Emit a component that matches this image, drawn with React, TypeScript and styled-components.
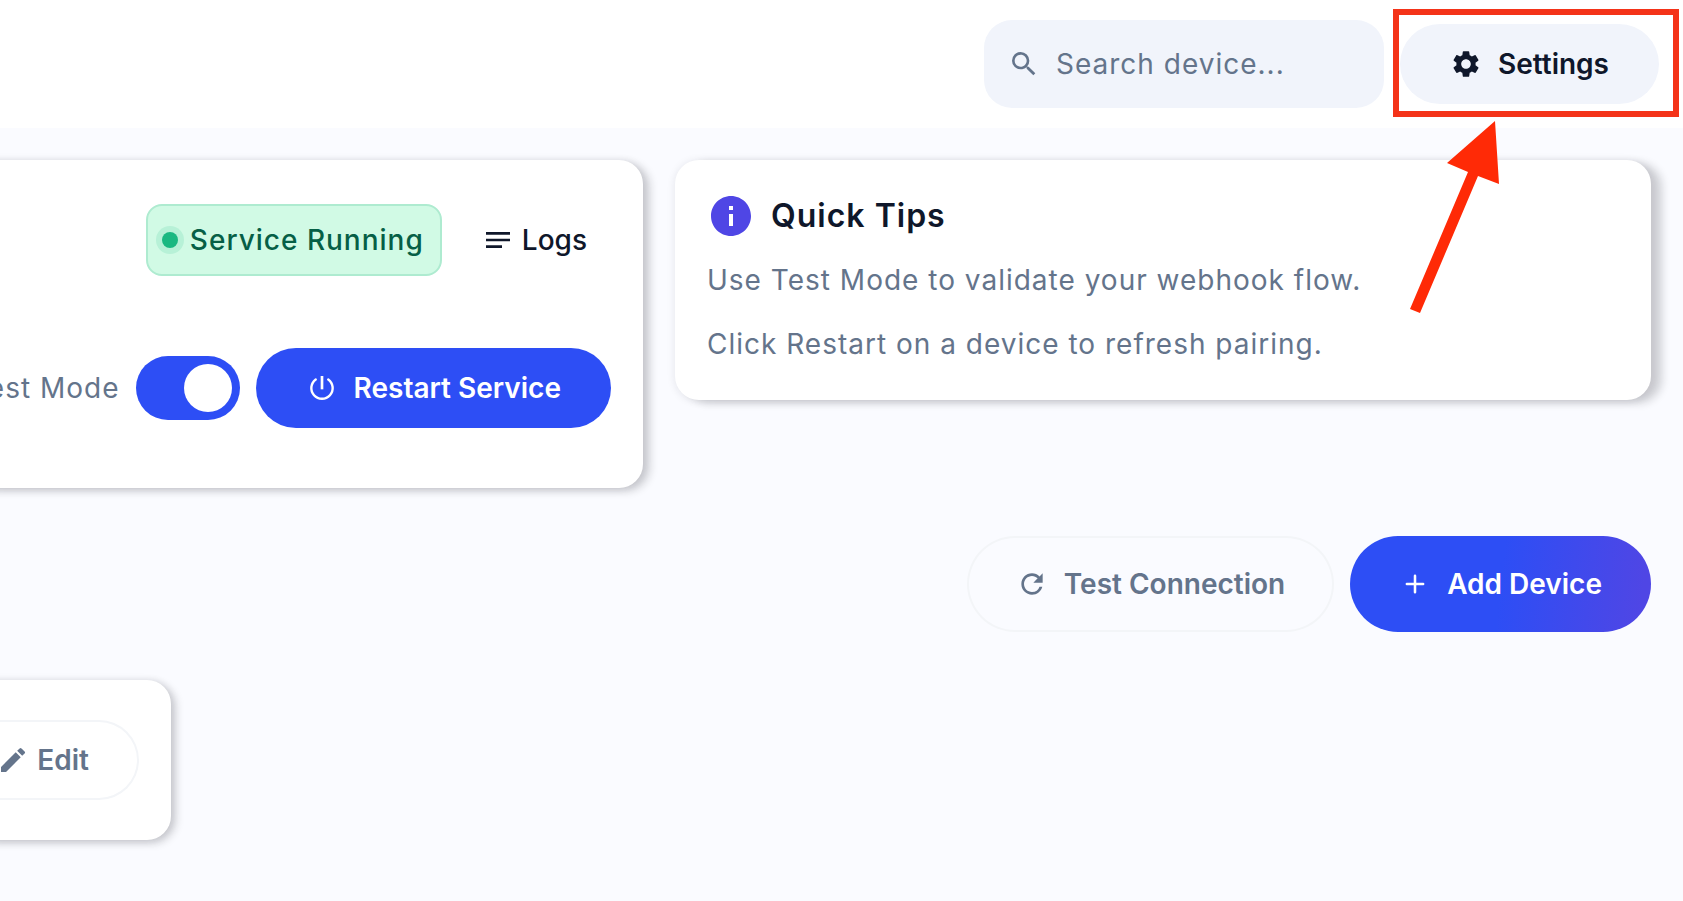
import React from "react";
import styled, { createGlobalStyle, css } from "styled-components";
import { MdSearch, MdSettings, MdNotes, MdInfo, MdEdit, MdRefresh } from "react-icons/md";

const color = {
  page: "#fafbff",
  surface: "#ffffff",
  field: "#f1f4fb",
  ink: "#0f172a",
  muted: "#64748b",
  primary: "#2d4ef5",
  accent: "#4f46e5",
  outline: "#f3f5f8",
  marker: "#f43319",
  arrow: "#ff2a06",
};

const GlobalStyle = createGlobalStyle`
  *, *::before, *::after { box-sizing: border-box; }
  body {
    margin: 0;
    background: ${color.page};
    color: ${color.ink};
    font-family: Inter, "Liberation Sans", sans-serif;
    font-size: 28px;
    line-height: 48px;
    letter-spacing: 1px;
    overflow-x: hidden;
  }
  button, input { font: inherit; color: inherit; }
  input { letter-spacing: inherit; }
`;

const Page = styled.div`
  min-height: 100vh;
  background: ${color.page};
`;

const Header = styled.header`
  display: flex;
  align-items: center;
  justify-content: flex-end;
  gap: 16px;
  min-height: 128px;
  padding: 20px 24px;
  background: ${color.surface};
`;

const SearchField = styled.label`
  display: flex;
  align-items: center;
  gap: 16px;
  width: 400px;
  height: 88px;
  padding: 0 24px;
  border-radius: 28px;
  background: ${color.field};
  color: ${color.muted};

  svg { flex: none; }
`;

const SearchInput = styled.input`
  flex: 1;
  min-width: 0;
  padding: 0;
  border: 0;
  outline: 0;
  background: transparent;

  &::placeholder { color: ${color.muted}; opacity: 1; }
`;

type Variant = "soft" | "solid" | "gradient" | "outline" | "text";

const variants = {
  soft: css`background: ${color.field}; color: ${color.ink};`,
  solid: css`background: ${color.primary}; color: #fff;`,
  gradient: css`
    background: linear-gradient(96deg, ${color.primary} 50%, ${color.accent} 96%);
    color: #fff;
  `,
  outline: css`
    background: transparent;
    color: ${color.muted};
    box-shadow: inset 0 0 0 2px ${color.outline};
  `,
  text: css`
    padding: 0 24px;
    background: transparent;
    color: ${color.ink};
    font-weight: 500;
  `,
};

const Button = styled.button<{ $variant: Variant; $tall?: boolean; $compact?: boolean }>`
  display: inline-flex;
  flex: none;
  align-items: center;
  gap: ${(p) => (p.$compact ? 8 : 16)}px;
  height: ${(p) => (p.$tall ? 96 : 80)}px;
  padding: 0 ${(p) => (p.$tall ? 49 : 50)}px;
  border: 0;
  border-radius: 48px;
  font-weight: 600;
  white-space: nowrap;
  cursor: pointer;
  ${(p) => variants[p.$variant]}
`;

const Callout = styled.div`
  position: relative;
  display: flex;
`;

const CalloutFrame = styled.span`
  position: absolute;
  inset: -15px -20px -13px -7px;
  border: 6px solid ${color.marker};
  pointer-events: none;
`;

const CalloutArrow = styled.svg`
  position: absolute;
  top: 97px;
  left: 10px;
  z-index: 1;
  pointer-events: none;
`;

const Main = styled.main`
  display: flex;
  flex-direction: column;
  gap: 48px;
  padding: 32px 32px 60px 0;
`;

const Overview = styled.div`
  display: grid;
  grid-template-columns: minmax(0, 643px) minmax(0, 1fr);
  gap: 32px;
  align-items: start;
`;

const Card = styled.section<{ $bleed?: boolean; $cast: number }>`
  display: flex;
  flex-direction: column;
  margin-left: ${(p) => (p.$bleed ? -32 : 0)}px;
  padding: 32px;
  border-radius: 24px;
  background: ${color.surface};
  box-shadow:
    0 1px 8px rgba(30, 30, 50, 0.1),
    ${(p) => p.$cast}px 3px 8px rgba(20, 20, 25, 0.18);
`;

const StatusCard = styled(Card)`
  gap: 32px;
`;

const TipsCard = styled(Card)`
  gap: 16px;
`;

const CardRow = styled.div<{ $tall?: boolean }>`
  display: flex;
  align-items: center;
  justify-content: flex-end;
  gap: 16px;
  min-height: ${(p) => (p.$tall ? 136 : 96)}px;
`;

const StatusBadge = styled.span`
  display: flex;
  align-items: center;
  gap: 12px;
  height: 72px;
  padding: 0 16px 0 14px;
  border: 2px solid #aeebd0;
  border-radius: 16px;
  background: #d1fae5;
  color: #065f46;
  font-weight: 500;
  white-space: nowrap;
`;

const StatusDot = styled.span`
  width: 16px;
  height: 16px;
  border-radius: 50%;
  background: #1ab881;
  box-shadow: 0 0 0 6px #b7f1d7;
`;

const SwitchLabel = styled.label`
  display: flex;
  flex: none;
  align-items: center;
  gap: 16px;
  color: ${color.muted};
  white-space: nowrap;
`;

const Switch = styled.input`
  appearance: none;
  display: flex;
  align-items: center;
  width: 104px;
  height: 64px;
  margin: 0;
  padding: 8px;
  border-radius: 32px;
  background: #b8c1d0;
  cursor: pointer;

  &::before {
    content: "";
    width: 48px;
    height: 48px;
    border-radius: 50%;
    background: #fff;
  }

  &:checked {
    justify-content: flex-end;
    background: ${color.primary};
  }
`;

const TipsHeading = styled.h2`
  display: flex;
  align-items: center;
  gap: 16px;
  margin: 0;
  font-size: 32px;
  font-weight: 600;

  svg { color: ${color.accent}; }
`;

const Tip = styled.p`
  margin: 0;
  color: ${color.muted};
`;

const Actions = styled.div`
  display: flex;
  justify-content: flex-end;
  gap: 16px;
`;

const DeviceCard = styled(Card)`
  width: 203px;
  align-items: flex-end;
  justify-content: center;
  min-height: 160px;
`;

const PlusIcon = () => (
  <svg width="32" height="32" viewBox="0 0 24 24" fill="none" stroke="currentColor" strokeWidth="1.9" strokeLinecap="round" aria-hidden="true">
    <path d="M12 5.9v12.2M5.9 12h12.2" />
  </svg>
);

const PowerIcon = () => (
  <svg width="32" height="32" viewBox="0 0 24 24" fill="none" stroke="currentColor" strokeWidth="1.8" aria-hidden="true">
    <path d="M12 3v10" strokeWidth="2" />
    <path d="M7.3 5.6A8 8 0 1 0 16.7 5.6" strokeLinecap="round" />
  </svg>
);

export default function App() {
  return (
    <>
      <GlobalStyle />
      <Page>
        <Header>
          <SearchField>
            <MdSearch size={32} aria-hidden="true" />
            <SearchInput type="text" aria-label="Search device" placeholder="Search device..." />
          </SearchField>
          <Callout>
            <Button type="button" $variant="soft">
              <MdSettings size={32} aria-hidden="true" />
              Settings
            </Button>
            <CalloutFrame />
            <CalloutArrow width="90" height="193" viewBox="0 0 90 193" aria-hidden="true">
              <path d="M85 0 37 42 58 51 0 188 10 192 68 55 89 63Z" fill={color.arrow} />
            </CalloutArrow>
          </Callout>
        </Header>

        <Main>
          <Overview>
            <StatusCard $bleed $cast={7}>
              <CardRow>
                <StatusBadge>
                  <StatusDot />
                  Service Running
                </StatusBadge>
                <Button type="button" $variant="text" $compact>
                  <MdNotes size={32} aria-hidden="true" />
                  Logs
                </Button>
              </CardRow>
              <CardRow $tall>
                <SwitchLabel>
                  Test Mode
                  <Switch type="checkbox" role="switch" defaultChecked />
                </SwitchLabel>
                <Button type="button" $variant="solid">
                  <PowerIcon />
                  Restart Service
                </Button>
              </CardRow>
            </StatusCard>

            <TipsCard $cast={11}>
              <TipsHeading>
                <MdInfo size={48} aria-hidden="true" />
                Quick Tips
              </TipsHeading>
              <Tip>Use Test Mode to validate your webhook flow.</Tip>
              <Tip>Click Restart on a device to refresh pairing.</Tip>
            </TipsCard>
          </Overview>

          <Actions>
            <Button type="button" $variant="outline" $tall>
              <MdRefresh size={32} aria-hidden="true" />
              Test Connection
            </Button>
            <Button type="button" $variant="gradient" $tall>
              <PlusIcon />
              Add Device
            </Button>
          </Actions>

          <DeviceCard $bleed $cast={5}>
            <Button type="button" $variant="outline" $compact>
              <MdEdit size={32} aria-hidden="true" />
              Edit
            </Button>
          </DeviceCard>
        </Main>
      </Page>
    </>
  );
}
